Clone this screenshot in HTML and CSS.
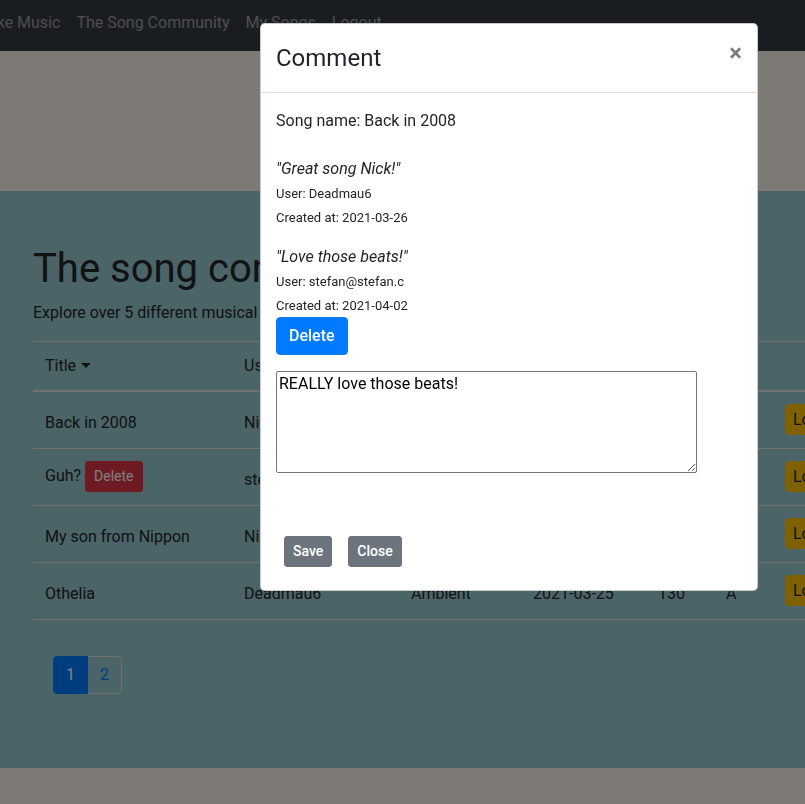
FILE: index.html
```html
<!DOCTYPE html>
<html lang="en">
<head>
<meta charset="utf-8">
<title>The Song Community</title>
<link rel="stylesheet" href="styles.css">
</head>
<body>
<div class="page">
  <nav class="navbar">
    <a class="nav-link first" href="#">Make Music</a>
    <a class="nav-link" href="#">The Song Community</a>
    <a class="nav-link" href="#">My Songs</a>
    <a class="nav-link" href="#">Logout</a>
  </nav>
  <div class="banner"></div>
  <section class="community">
    <h1 class="title">The song community</h1>
    <p class="lead">Explore over 5 different musical creations from our community</p>
    <table class="songs">
      <colgroup>
        <col class="c1"><col class="c2"><col class="c3"><col class="c4"><col class="c5"><col class="c6"><col class="c7">
      </colgroup>
      <thead>
        <tr><th>Title <span class="caret"></span></th><th>User</th><th>Genre</th><th>Created</th><th>BPM</th><th>Key</th><th></th></tr>
      </thead>
      <tbody>
        <tr><td class="txt">Back in 2008</td><td class="txt">Nick</td><td class="txt">House</td><td class="txt">2021-03-20</td><td class="txt">124</td><td class="txt">C</td><td class="act"><button class="btn-load">Load</button></td></tr>
        <tr><td class="mid">Guh? <button class="btn-danger">Delete</button></td><td class="txt">stefan@stefan.c</td><td class="txt">Techno</td><td class="txt">2021-03-22</td><td class="txt">128</td><td class="txt">D</td><td class="act"><button class="btn-load">Load</button></td></tr>
        <tr><td class="txt">My son from Nippon</td><td class="txt">Nick</td><td class="txt">Lo-fi</td><td class="txt">2021-03-24</td><td class="txt">90</td><td class="txt">E</td><td class="act"><button class="btn-load">Load</button></td></tr>
        <tr><td class="txt">Othelia</td><td class="txt">Deadmau6</td><td class="txt">Ambient</td><td class="txt">2021-03-25</td><td class="txt">130</td><td class="txt">A</td><td class="act"><button class="btn-load">Load</button></td></tr>
      </tbody>
    </table>
    <ul class="pagination">
      <li class="page-link active">1</li>
      <li class="page-link">2</li>
    </ul>
  </section>
</div>

<div class="backdrop"></div>

<div class="modal">
  <div class="modal-header">
    <h5 class="modal-title">Comment</h5>
    <button class="close" aria-label="Close">&times;</button>
  </div>
  <div class="modal-body">
    <p class="song">Song name: Back in 2008</p>
    <div class="comment">
      <p class="quote">"Great song Nick!"</p>
      <p class="meta">User: Deadmau6</p>
      <p class="meta">Created at: 2021-03-26</p>
    </div>
    <div class="comment last">
      <p class="quote">"Love those beats!"</p>
      <p class="meta">User: stefan@stefan.c</p>
      <p class="meta">Created at: 2021-04-02</p>
    </div>
    <button class="btn-primary">Delete</button>
    <textarea class="editor">REALLY love those beats!</textarea>
    <div class="modal-footer">
      <button class="btn-secondary">Save</button>
      <button class="btn-secondary">Close</button>
    </div>
  </div>
</div>
</body>
</html>
```

FILE: styles.css
```css
* { box-sizing: border-box; }

html, body {
  margin: 0;
  padding: 0;
}

body {
  font-family: Roboto, "Liberation Sans", sans-serif;
  font-size: 16px;
  line-height: 1.5;
  color: #212529;
  background: #faf4ea;
  overflow: hidden;
  height: 804px;
}

.page {
  width: 805px;
}

/* navbar */
.navbar {
  display: flex;
  height: 51px;
  background: #343a40;
  padding-top: 11px;
  white-space: nowrap;
}

.nav-link {
  display: block;
  padding: 0 8px;
  line-height: 24px;
  color: rgba(255, 255, 255, 0.5);
  text-decoration: none;
}

.nav-link.first {
  margin-left: -34px;
}

.banner {
  height: 140px;
}

/* community section */
.community {
  background: #96c8d0;
  height: 577px;
  padding: 54px 0 0 33px;
}

.title {
  margin: 0 0 8px;
  font-size: 40px;
  font-weight: 400;
  line-height: 1.2;
  white-space: nowrap;
}

.lead {
  margin: 0 0 16px;
  white-space: nowrap;
}

.songs {
  border-collapse: collapse;
  table-layout: fixed;
  width: 860px;
  border-bottom: 1px solid #dee2e6;
}

.c1 { width: 199px; }
.c2 { width: 167px; }
.c3 { width: 122px; }
.c4 { width: 125px; }
.c5 { width: 68px; }
.c6 { width: 59px; }
.c7 { width: 120px; }

.songs th {
  text-align: left;
  font-weight: 400;
  padding: 12px;
  line-height: 24px;
  border-top: 1px solid #dee2e6;
  border-bottom: 2px solid #dee2e6;
  white-space: nowrap;
}

.caret {
  display: inline-block;
  width: 0;
  height: 0;
  margin-left: 1px;
  vertical-align: 3px;
  border-top: 5px solid #212529;
  border-left: 5px solid transparent;
  border-right: 5px solid transparent;
}

.songs td {
  border-top: 1px solid #dee2e6;
  height: 57px;
  padding: 0 12px;
  white-space: nowrap;
  overflow: hidden;
}

.songs td.txt {
  vertical-align: top;
  padding-top: 19px;
  line-height: 24px;
}

.songs td.mid {
  vertical-align: middle;
}

.songs td.act {
  vertical-align: middle;
}

.btn-danger {
  font-family: inherit;
  font-size: 14px;
  line-height: 21px;
  padding: 4px 8px;
  color: #fff;
  background: #dc3545;
  border: 1px solid #dc3545;
  border-radius: 3px;
  margin-left: 0;
  vertical-align: middle;
}

.btn-load {
  font-family: inherit;
  font-size: 16px;
  line-height: 23px;
  padding: 3px 7px;
  color: #212529;
  background: #ffc107;
  border: 1px solid #ffc107;
  border-radius: 4px;
}

.pagination {
  display: flex;
  list-style: none;
  margin: 36px 0 0 20px;
  padding: 0;
}

.page-link {
  width: 35px;
  text-align: center;
  padding: 8px 0;
  line-height: 20px;
  color: #007bff;
  border: 1px solid #dee2e6;
}

.page-link + .page-link {
  margin-left: -1px;
  width: 35px;
  border-radius: 0 4px 4px 0;
}

.page-link.active {
  color: #fff;
  background: #007bff;
  border-color: #007bff;
  border-radius: 4px 0 0 4px;
  position: relative;
  z-index: 1;
}

/* overlay */
.backdrop {
  position: fixed;
  inset: 0;
  z-index: 10;
  background: rgba(0, 0, 0, 0.5);
}

.modal {
  position: absolute;
  z-index: 20;
  left: 260px;
  top: 23px;
  width: 498px;
  height: 568px;
  background: #fff;
  border: 1px solid rgba(0, 0, 0, 0.2);
  border-radius: 5px;
}

.modal-header {
  display: flex;
  align-items: flex-start;
  justify-content: space-between;
  padding: 16px 15px;
  border-bottom: 1px solid #dee2e6;
}

.modal-title {
  margin: 0;
  font-size: 24px;
  font-weight: 400;
  line-height: 36px;
}

.close {
  font-family: inherit;
  font-size: 24px;
  font-weight: 700;
  line-height: 1;
  color: #000;
  opacity: 0.5;
  background: none;
  border: 0;
  padding: 0;
  margin: 1px 0 0 0;
}

.modal-body {
  padding: 16px 15px;
}

.song {
  margin: 0 0 23px;
  line-height: 24px;
}

.comment {
  margin-bottom: 14px;
}

.comment.last {
  margin-bottom: -1px;
}

.quote {
  margin: 0;
  font-style: italic;
  font-size: 16px;
  line-height: 26px;
}

.meta {
  margin: 0;
  font-size: 13px;
  line-height: 24px;
}

.btn-primary {
  display: block;
  font-family: inherit;
  font-size: 16px;
  font-weight: 500;
  line-height: 24px;
  padding: 6px 12px;
  color: #fff;
  background: #007bff;
  border: 1px solid #007bff;
  border-radius: 4px;
}

.editor {
  display: block;
  margin-top: 16px;
  width: 421px;
  height: 102px;
  padding: 2px;
  font-family: inherit;
  font-size: 16px;
  line-height: 20px;
  color: #000;
  border: 1px solid #767676;
  border-radius: 2px;
  resize: vertical;
}

.modal-footer {
  display: flex;
  gap: 16px;
  margin-top: 63px;
  padding-left: 8px;
}

.btn-secondary {
  font-family: inherit;
  font-size: 14px;
  font-weight: 500;
  line-height: 21px;
  padding: 4px 8px;
  color: #fff;
  background: #6c757d;
  border: 1px solid #6c757d;
  border-radius: 3px;
}
```
